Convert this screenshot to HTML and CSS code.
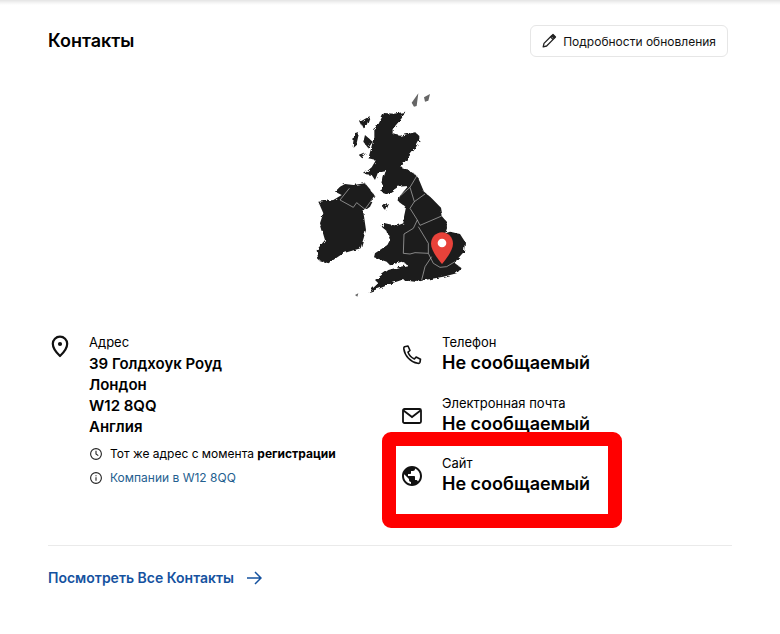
FILE: index.html
```html
<!DOCTYPE html>
<html lang="ru">
<head>
<meta charset="utf-8">
<title>Контакты</title>
<link rel="stylesheet" href="styles.css">
</head>
<body>
<main class="card">
  <header class="head">
    <h2 class="title">Контакты</h2>
    <button class="edit" type="button">
      <svg class="edit-icon" viewBox="0 0 16 16" fill="none" stroke="#222" stroke-width="1.3" stroke-linejoin="round"><path d="M2.2 13.8l.8-3.4 7.6-7.6 2.6 2.6-7.6 7.6z"/><path d="M9.5 3.9l2.6 2.6" /><path d="M11 2.4l1-.9 2.5 2.5-1 1z" fill="#222"/></svg>
      Подробности обновления
    </button>
  </header>

  <div class="map-wrap">
    <svg class="map" viewBox="0 0 540 675">
      <defs>
        <filter id="rough" x="-5%" y="-5%" width="110%" height="110%">
          <feTurbulence type="fractalNoise" baseFrequency="0.07" numOctaves="3" seed="4"/>
          <feDisplacementMap in="SourceGraphic" scale="13"/>
          <feGaussianBlur stdDeviation="0.7"/>
        </filter>
      </defs>
      <g fill="#1c1c1c" filter="url(#rough)">
        <path d="M252 99L282 101 316 95 305 115 295 127 278 147 278 162 300 167 345 157 358 167 358 182 345 207 325 232 310 252 300 260 320 268 345 283 355 295 372 335 395 355 420 380 425 408 440 425 441 445 436 460 450 455 480 462 495 485 492 515 470 540 465 550 485 565 470 580 430 590 375 600 350 606 305 600 280 608 240 625 205 637 235 610 225 600 265 570 295 562 325 555 305 545 270 556 260 545 222 532 225 520 262 495 270 480 262 455 245 440 255 430 290 437 310 430 312 410 318 382 296 365 298 350 310 335 325 318 295 320 262 342 244 335 250 295 258 270 245 272 235 275 225 300 215 285 192 282 215 262 228 240 205 235 212 210 220 178 220 147 233 137z"/>
        <path d="M120 320L135 312 160 315 195 310 212 330 225 350 210 380 190 395 198 450 182 505 130 520 85 550 55 540 50 510 75 480 60 430 70 400 55 365 100 360 125 345 105 335z"/>
        <path d="M180 125L210 108 200 135 188 142zM163 160L178 155 170 190 158 200zM195 165L218 185 205 205 190 185zM178 228L198 220 185 232zM248 380L265 365 255 390z"/>
      </g>
      <g fill="#666">
        <path d="M335 68L355 40 350 78 342 80zM372 52L390 42 385 62 375 65zM165 645L175 640 172 650z"/>
      </g>
      <g fill="none" stroke="#cfcfcf" stroke-width="1.800">
        <path d="M352 285L330 322 298 350M330 322L343 365 375 342M343 365L330 385 352 420 360 436 425 408M352 420L340 445 312 462 310 520 330 522 345 518 385 520 385 490 355 440M385 520L400 550 420 562 440 560 465 545M395 530L375 560 365 600M120 360L160 382 170 368 195 388 222 350M120 360L148 325"/>
      </g>
      <path d="M426 457c-18 0-33 15-33 34 0 24 33 61 33 61s33-37 33-61c0-19-15-34-33-34z" fill="#e8423a"/>
      <circle cx="426" cy="489" r="13" fill="#fff"/>
    </svg>
  </div>

  <section class="details">
    <div class="item">
      <svg class="icon" viewBox="0 0 24 24" fill="none" stroke="#111" stroke-width="2.2"><path d="M12 22s7.2-6.600 7.200-12.200A7.200 7.200 0 0 0 4.800 9.800C4.800 15.400 12 22 12 22z" stroke-linejoin="round"/><circle cx="12" cy="10" r="2.100" fill="#111" stroke="none"/></svg>
      <div class="body">
        <div class="label">Адрес</div>
        <address class="addr">39 Голдхоук Роуд<br>Лондон<br>W12 8QQ<br>Англия</address>
        <div class="note">
          <svg class="mini" viewBox="0 0 14 14" fill="none" stroke="#222" stroke-width="1.100"><circle cx="7" cy="7" r="5.400"/><path d="M7 3.800V7l2.300 1.600"/></svg>
          <span>Тот же адрес с момента <b>регистрации</b></span>
        </div>
        <div class="note note-link">
          <svg class="mini" viewBox="0 0 14 14" fill="none" stroke="#222" stroke-width="1.100"><circle cx="7" cy="7" r="5.400"/><path d="M7 6.300v3.400M7 4.200v1"/></svg>
          <a class="sublink" href="#">Компании в W12 8QQ</a>
        </div>
      </div>
    </div>

    <div class="contacts">
      <div class="item">
        <svg class="icon" viewBox="0 0 24 24" fill="none" stroke="#111" stroke-width="1.600" stroke-linejoin="round"><path d="M4.500 3.800L8 3l2 4.500-2 1.700c1 2.600 3.600 5.400 6.400 6.800l1.700-2 4.400 2.300-.6 3.200c-.3.800-1.200 1-2.200.8C10.500 19 4.800 12.800 3.800 5.800c-.1-1 .1-1.700.7-2z"/></svg>
        <div class="body">
          <div class="label">Телефон</div>
          <div class="value">Не сообщаемый</div>
        </div>
      </div>
      <div class="item">
        <svg class="icon" viewBox="0 0 24 24" fill="none" stroke="#111" stroke-width="1.800"><rect x="3" y="5" width="18" height="14" rx="1.500"/><path d="M3.500 6.500L12 13l8.500-6.500"/></svg>
        <div class="body">
          <div class="label">Электронная почта</div>
          <div class="value">Не сообщаемый</div>
        </div>
      </div>
      <div class="item item-marked">
        <svg class="icon" viewBox="0 0 24 24" fill="#111"><path d="M12 2C6.480 2 2 6.480 2 12s4.480 10 10 10 10-4.480 10-10S17.520 2 12 2zm-1 17.930c-3.950-.49-7-3.850-7-7.930 0-.62.08-1.210.21-1.790L9 15v1c0 1.100.9 2 2 2v1.930zm6.900-2.540c-.26-.81-1-1.390-1.900-1.390h-1v-3c0-.55-.45-1-1-1H8v-2h2c.55 0 1-.45 1-1V7h2c1.100 0 2-.9 2-2v-.41c2.930 1.190 5 4.060 5 7.410 0 2.080-.8 3.970-2.100 5.390z"/></svg>
        <div class="body">
          <div class="label">Сайт</div>
          <div class="value">Не сообщаемый</div>
        </div>
        <div class="marker"></div>
      </div>
    </div>
  </section>

  <footer class="foot">
    <a class="all" href="#">Посмотреть Все Контакты
      <svg class="arrow" viewBox="0 0 16 16" fill="none" stroke="#15529f" stroke-width="1.500"><path d="M1 8h14M9 2l6 6-6 6"/></svg>
    </a>
  </footer>
</main>
</body>
</html>
```
FILE: styles.css
```css
* { box-sizing: border-box; }
html, body { margin: 0; height: 100%; background: #fff; }
body { font-family: Inter, "Liberation Sans", sans-serif; color: #000; overflow: hidden; }

.card {
  height: 634px;
  padding: 25px 48px 0;
  background: linear-gradient(#e4e4e4, #f6f6f6 3px, #fff 5px);
}

.head { display: flex; justify-content: space-between; align-items: center; padding-right: 4px; }
.title { margin: 0; font-size: 18px; line-height: 32px; font-weight: 600; }
.edit {
  display: flex; align-items: center; gap: 6px;
  height: 32px; padding: 0 11px 0 10px;
  background: #fff; border: 1px solid #e6e6e6; border-radius: 6px;
  font: 400 12px Inter, "Liberation Sans", sans-serif; color: #111;
}
.edit-icon { width: 16px; height: 16px; }

.map-wrap { display: flex; justify-content: center; margin-top: 23px; }
.map { display: block; width: 180px; height: 225px; }

.details { display: flex; margin-top: 29px; }
.details > .item { width: 352px; }
.item { display: flex; position: relative; }
.icon { flex: none; width: 24px; height: 24px; margin-right: 18px; }
.details > .item .icon { margin-right: 17px; }
.contacts .icon { margin-top: 9px; }

.label { font-size: 13px; line-height: 17px; }
.value { font-size: 18px; line-height: 24px; font-weight: 600; }
.contacts .item + .item { margin-top: 20px; }
.contacts .item + .item + .item { margin-top: 19px; }

.addr { font-style: normal; font-size: 15px; line-height: 21px; font-weight: 600; margin-top: 2px; }
.note { display: flex; align-items: center; gap: 7px; font-size: 12px; line-height: 16px; margin-top: 9px; }
.note b { font-weight: 700; }
.note-link { margin-top: 8px; }
.mini { width: 14px; height: 14px; flex: none; }
.sublink { color: #24608f; text-decoration: none; }

.marker {
  position: absolute;
  left: -18px; top: -23px;
  width: 240px; height: 96px;
  border: 14px solid #f00;
  border-radius: 9px;
}

.foot { margin: 49px 0 0; padding-top: 21px; border-top: 1px solid #eaeaea; }
.all {
  display: inline-flex; align-items: center; gap: 12px;
  color: #15529f; text-decoration: none; font-size: 14px; font-weight: 600; line-height: 18px;
}
.arrow { width: 16px; height: 16px; }
```
